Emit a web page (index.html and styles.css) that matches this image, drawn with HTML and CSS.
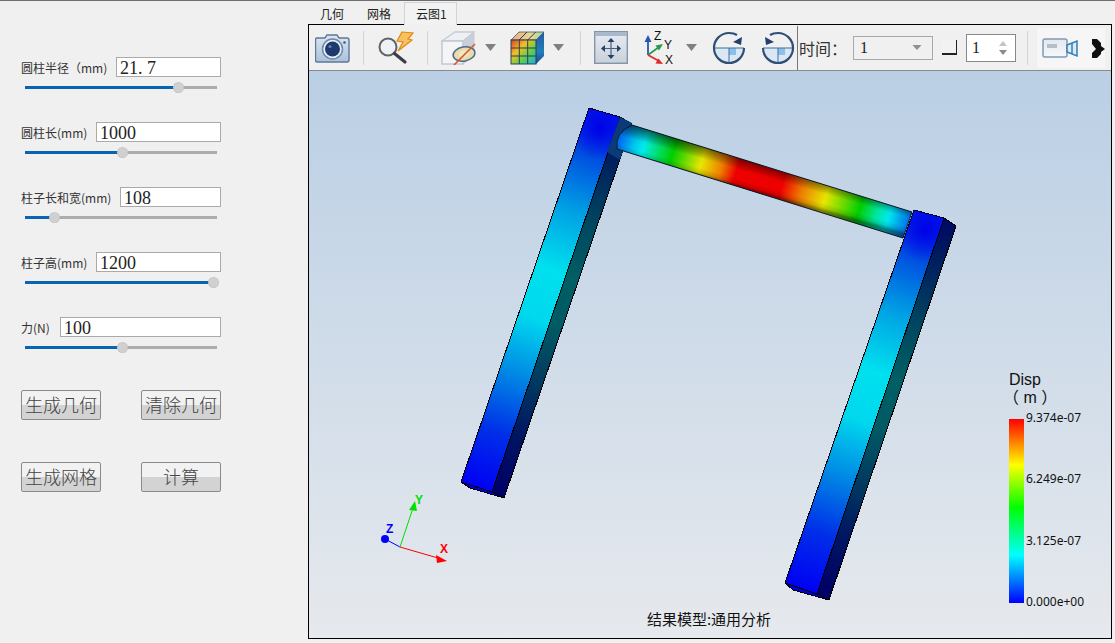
FILE: index.html
```html
<!DOCTYPE html>
<html lang="zh">
<head>
<meta charset="utf-8">
<title>云图</title>
<link rel="stylesheet" href="styles.css">
</head>
<body>
<div class="app">
  <aside class="sidebar">
    <div class="param">
      <div class="param-head"><span class="param-label">圆柱半径（mm)</span><div class="field field-a">21<span class="dot">.</span>7</div></div>
      <div class="slider"><div class="slider-fill" style="width:79.7%"><span class="slider-thumb"></span></div></div>
    </div>
    <div class="param">
      <div class="param-head"><span class="param-label">圆柱长(mm)</span><div class="field field-b">1000</div></div>
      <div class="slider"><div class="slider-fill" style="width:50.5%"><span class="slider-thumb"></span></div></div>
    </div>
    <div class="param">
      <div class="param-head"><span class="param-label">柱子长和宽(mm)</span><div class="field field-c">108</div></div>
      <div class="slider"><div class="slider-fill" style="width:15%"><span class="slider-thumb"></span></div></div>
    </div>
    <div class="param">
      <div class="param-head"><span class="param-label">柱子高(mm)</span><div class="field field-b">1200</div></div>
      <div class="slider"><div class="slider-fill" style="width:98%"><span class="slider-thumb"></span></div></div>
    </div>
    <div class="param">
      <div class="param-head"><span class="param-label">力(N)</span><div class="field field-d">100</div></div>
      <div class="slider"><div class="slider-fill" style="width:50.5%"><span class="slider-thumb"></span></div></div>
    </div>
    <div class="actions">
      <button class="btn">生成几何</button>
      <button class="btn">清除几何</button>
      <button class="btn">生成网格</button>
      <button class="btn">计算</button>
    </div>
  </aside>

  <main class="main">
    <nav class="tabs">
      <span class="tab tab-geo">几何</span>
      <span class="tab tab-mesh">网格</span>
      <span class="tab tab-active">云图1</span>
    </nav>
    <section class="frame">
      <div class="toolbar">
        <svg class="icon i-camera" viewBox="0 0 35 30">
          <defs><linearGradient id="camBody" x1="0" y1="0" x2="0" y2="1"><stop offset="0" stop-color="#dbe6f2"/><stop offset="1" stop-color="#a9c2dc"/></linearGradient></defs>
          <path d="M2 5h8l2-3h10l2 3h8q2 0 2 2v20q0 2-2 2H2q-1.500 0-1.500-2V7Q.5 5 2 5z" fill="url(#camBody)" stroke="#5f7896" stroke-width="1.400"/>
          <circle cx="17.500" cy="16" r="10" fill="#e8eff7" stroke="#6f88a6" stroke-width="1.500"/>
          <circle cx="17.500" cy="16" r="7.500" fill="#1c3a70"/>
          <circle cx="15" cy="13.500" r="1.600" fill="#5f80ad"/>
          <circle cx="29.500" cy="9.500" r="1.300" fill="#3f5c80"/>
        </svg>
        <span class="sep sep-a"></span>
        <svg class="icon i-search" viewBox="0 0 36 35">
          <path d="M24 2l11 1-5 6 4 1-14 11 5-9-6-1z" fill="#f8c060" stroke="#e08a10" stroke-width="1.200"/>
          <circle cx="10" cy="17" r="8.500" fill="#eef2f6" fill-opacity=".8" stroke="#5f6368" stroke-width="2"/>
          <path d="M16.500 23.500L27 32" stroke="#3a3f46" stroke-width="3.200" stroke-linecap="round"/>
        </svg>
        <span class="sep sep-b"></span>
        <svg class="icon i-cube" viewBox="0 0 38 34">
          <path d="M1 10L14 1h19L22 10z" fill="#eff0f3" stroke="#c4ccd6" stroke-width="1.300"/>
          <path d="M22 10L33 1v23l-11 9z" fill="#c9cfd9" stroke="#c4ccd6" stroke-width="1"/>
          <rect x="1" y="10" width="21" height="23" fill="#f5f5f7" stroke="#c0c8d4" stroke-width="1.500"/>
          <ellipse cx="23" cy="23" rx="11" ry="7" transform="rotate(-10 23 23)" fill="#e8dcae" stroke="#50688a" stroke-width="1.500"/>
          <ellipse cx="23" cy="23" rx="5" ry="3.500" transform="rotate(-10 23 23)" fill="#f0e8c8"/>
          <path d="M13 34L34 13" stroke="#d9562b" stroke-width="1.600"/>
        </svg>
        <svg class="icon i-caret caret-a" viewBox="0 0 11 7"><path d="M0 0h11L5.500 7z"/></svg>
        <svg class="icon i-colorcube" viewBox="0 0 35 34">
          <defs>
            <linearGradient id="ccFront" x1="0" y1="0" x2="1" y2="1"><stop offset="0" stop-color="#d8402a"/><stop offset=".35" stop-color="#f4c020"/><stop offset=".65" stop-color="#58d050"/><stop offset="1" stop-color="#20a8e8"/></linearGradient>
            <linearGradient id="ccSide" x1="0" y1="0" x2="0" y2="1"><stop offset="0" stop-color="#2858a0"/><stop offset=".6" stop-color="#2080b8"/><stop offset="1" stop-color="#1848a0"/></linearGradient>
            <linearGradient id="ccTop" x1="0" y1="0" x2="1" y2="0"><stop offset="0" stop-color="#f0a880"/><stop offset=".6" stop-color="#e8d890"/><stop offset="1" stop-color="#a0d8a0"/></linearGradient>
          </defs>
          <path d="M1 9L9 1h25L26 9z" fill="url(#ccTop)" stroke="#3a5474" stroke-width=".8"/>
          <path d="M26 9l8-8v24l-8 8z" fill="url(#ccSide)"/>
          <rect x="1" y="9" width="25" height="24" fill="url(#ccFront)" stroke="#2a3c58" stroke-width="1"/>
          <path d="M9.300 9v24M17.700 9v24M1 17h25M1 25h25M9 9l8-8M17.700 9l8-8" stroke="#2a3c58" stroke-width="1" fill="none"/>
        </svg>
        <svg class="icon i-caret caret-b" viewBox="0 0 11 7"><path d="M0 0h11L5.500 7z"/></svg>
        <span class="sep sep-c"></span>
        <svg class="icon i-fit" viewBox="0 0 34 33">
          <defs><linearGradient id="fitBg" x1="0" y1="0" x2="0" y2="1"><stop offset="0" stop-color="#e8ecf2"/><stop offset="1" stop-color="#c8d0da"/></linearGradient></defs>
          <rect x=".7" y=".7" width="32.600" height="31.600" fill="url(#fitBg)" stroke="#8494aa" stroke-width="1.400"/>
          <rect x="1" y="1" width="32" height="4" fill="#a9b8ca"/>
          <path d="M17 11v13M11 17.500h12" stroke="#4a5f80" stroke-width="1.200"/>
          <path d="M17 7l-3.500 4h7zM17 28l-3.500-4h7zM7 17.500l4-3.500v7zM27 17.500l-4-3.500v7z" fill="#223f6c"/>
        </svg>
        <svg class="icon i-axes" viewBox="0 0 32 36">
          <path d="M4 25V10" stroke="#2458b0" stroke-width="1.800"/><path d="M4 5L.5 12h7z" fill="#2458b0"/>
          <path d="M4 25L15 17" stroke="#2c9a4c" stroke-width="1.800"/><path d="M19 14l-7.500 1.500 3.500 5z" fill="#2c9a4c"/>
          <path d="M4 25l11 6" stroke="#e02a2a" stroke-width="1.800"/><path d="M19 34l-7.500-.5 3-5z" fill="#e02a2a"/>
          <text class="axis-letter" x="10" y="10">Z</text><text class="axis-letter" x="20" y="19">Y</text><text class="axis-letter" x="21" y="34">X</text>
        </svg>
        <svg class="icon i-caret caret-c" viewBox="0 0 11 7"><path d="M0 0h11L5.500 7z"/></svg>
        <svg class="icon i-rot rot-a" viewBox="0 0 34 34">
          <path d="M2 17h30a15 15 0 0 1-30 0z" fill="#dbe8f4"/>
          <path d="M17 17h7v7h-7z" fill="#8cc0ea"/>
          <path d="M2 17h30M17 17v15" fill="none" stroke="#3d6ea0" stroke-width="1"/>
          <path d="M32 17A15 15 0 1 1 17 2q5 0 8 2" fill="none" stroke="#2f4f75" stroke-width="2.200"/>
          <path d="M30 6l-1 8-8-3z" fill="#223f6c"/>
        </svg>
        <svg class="icon i-rot rot-b" viewBox="0 0 34 34">
          <path d="M2 17h30a15 15 0 0 1-30 0z" fill="#dbe8f4"/>
          <path d="M17 17h7v7h-7z" fill="#8cc0ea"/>
          <path d="M2 17h30M17 17v15" fill="none" stroke="#3d6ea0" stroke-width="1"/>
          <path d="M2 17a15 15 0 1 0 15-15q-5 0-8 2" fill="none" stroke="#2f4f75" stroke-width="2.200"/>
          <path d="M4 6l1 8 8-3z" fill="#223f6c"/>
        </svg>
        <span class="sep sep-dark"></span>
        <span class="time-label">时间：</span>
        <div class="combo"><span class="combo-val">1</span><svg class="combo-caret" viewBox="0 0 11 6"><path d="M0 0h11L5.500 6z"/></svg></div>
        <span class="check"></span>
        <div class="spin"><span class="combo-val">1</span>
          <span class="spin-arrows"><svg viewBox="0 0 8 5"><path d="M4 0l4 5H0z" fill="#c4c4c4"/></svg><svg viewBox="0 0 8 5"><path d="M0 0h8L4 5z" fill="#8a8a8a"/></svg></span>
        </div>
        <span class="sep sep-e"></span>
        <div class="rec">
          <svg class="i-video" viewBox="0 0 36 20">
            <defs><linearGradient id="vidBody" x1="0" y1="0" x2="0" y2="1"><stop offset="0" stop-color="#e4e8ee"/><stop offset="1" stop-color="#f6f8fa"/></linearGradient></defs>
            <rect x="1" y="1" width="24" height="18" rx="2" fill="url(#vidBody)" stroke="#7f9ab8" stroke-width="1.500"/>
            <rect x="5" y="6" width="10" height="4" fill="#b4bec9"/>
            <path d="M25 7l10-4v15l-10-4z" fill="#dfeaf4" stroke="#2f7fbc" stroke-width="1.500"/>
            <path d="M30 5v11" stroke="#2f7fbc" stroke-width="1.500"/>
          </svg>
          <svg class="i-next" viewBox="0 0 13 20"><path d="M0 1h5l4 4v3l4 3-4 3v2l-4 4H0v-5l4-4-4-5z" fill="#111"/></svg>
        </div>
      </div>

      <div class="viewport">
        <svg class="scene" viewBox="309 71 802 567">
          <defs>
            <linearGradient id="colL" gradientUnits="userSpaceOnUse" x1="604" y1="112" x2="476" y2="487">
              <stop offset="0" stop-color="#0018e8"/><stop offset=".12" stop-color="#0050e0"/><stop offset=".27" stop-color="#00a4e4"/><stop offset=".42" stop-color="#00e0ee"/><stop offset=".55" stop-color="#00d8ee"/><stop offset=".7" stop-color="#0088e4"/><stop offset=".85" stop-color="#0030e8"/><stop offset="1" stop-color="#0000f4"/>
            </linearGradient>
            <linearGradient id="colR" gradientUnits="userSpaceOnUse" x1="929" y1="214" x2="801" y2="588">
              <stop offset="0" stop-color="#0018e8"/><stop offset=".12" stop-color="#0050e0"/><stop offset=".27" stop-color="#00a4e4"/><stop offset=".42" stop-color="#00e0ee"/><stop offset=".55" stop-color="#00d8ee"/><stop offset=".7" stop-color="#0088e4"/><stop offset=".85" stop-color="#0030e8"/><stop offset="1" stop-color="#0000f4"/>
            </linearGradient>
            <linearGradient id="beamAxis" gradientUnits="userSpaceOnUse" x1="622" y1="135" x2="908" y2="225">
              <stop offset="0" stop-color="#0070f0"/><stop offset=".05" stop-color="#00c8ee"/><stop offset=".08" stop-color="#00ecee"/><stop offset=".13" stop-color="#00e070"/><stop offset=".18" stop-color="#00d000"/><stop offset=".28" stop-color="#e8e800"/><stop offset=".35" stop-color="#f08000"/><stop offset=".4" stop-color="#f00000"/><stop offset=".56" stop-color="#f00000"/><stop offset=".63" stop-color="#f08000"/><stop offset=".71" stop-color="#e8e800"/><stop offset=".83" stop-color="#00d000"/><stop offset=".89" stop-color="#00e8a0"/><stop offset=".93" stop-color="#00e8ee"/><stop offset="1" stop-color="#0070ee"/>
            </linearGradient>
            <linearGradient id="beamShade" gradientUnits="userSpaceOnUse" x1="771" y1="166" x2="763" y2="194">
              <stop offset="0" stop-color="#000" stop-opacity=".55"/><stop offset=".25" stop-color="#000" stop-opacity=".25"/><stop offset=".42" stop-color="#000" stop-opacity=".02"/><stop offset=".72" stop-color="#000" stop-opacity="0"/><stop offset=".88" stop-color="#000" stop-opacity=".12"/><stop offset="1" stop-color="#000" stop-opacity=".45"/>
            </linearGradient>
            <radialGradient id="hotL" gradientUnits="userSpaceOnUse" cx="600" cy="128" r="32"><stop offset="0" stop-color="#0000e8"/><stop offset="1" stop-color="#0000e8" stop-opacity="0"/></radialGradient>
            <radialGradient id="hotR" gradientUnits="userSpaceOnUse" cx="925" cy="230" r="32"><stop offset="0" stop-color="#0000e8"/><stop offset="1" stop-color="#0000e8" stop-opacity="0"/></radialGradient>
          </defs>

          <polygon class="edge" points="461,482 492,492 504,498 470,488" fill="#0000d0"/>
          <polygon class="edge" points="620,117 632,124 504,498 492,492" fill="url(#colL)"/>
          <polygon points="620,117 632,124 504,498 492,492" fill="#000" fill-opacity=".58"/>
          <polygon class="edge" points="589,108 620,117 492,492 461,482" fill="url(#colL)"/>
          <polygon points="589,108 620,117 560,290 540,250" fill="url(#hotL)"/>
          <path d="M620 117L632 123 620 160 607 152z" fill="#0b3a78"/>
          <path class="beam-edge" d="M632 125L912 212 903 238 617 149Q615 132 632 125z" fill="url(#beamAxis)"/>
          <path d="M632 125L912 212 903 238 617 149Q615 132 632 125z" fill="url(#beamShade)"/>

          <polygon class="edge" points="785,583 817,594 829,600 793,590" fill="#0000d0"/>
          <polygon class="edge" points="944,218 956,226 829,600 817,594" fill="url(#colR)"/>
          <polygon points="944,218 956,226 829,600 817,594" fill="#000" fill-opacity=".58"/>
          <polygon class="edge" points="914,210 944,218 817,594 785,583" fill="url(#colR)"/>
          <polygon points="914,210 944,218 885,390 865,350" fill="url(#hotR)"/>

          <g class="triad">
            <line x1="400" y1="547" x2="385" y2="539" stroke="#0000ff"/>
            <circle cx="385" cy="539" r="4" fill="#0000ff"/>
            <line x1="400" y1="547" x2="413" y2="508" stroke="#00e000"/>
            <polygon points="415,501 409,510 417,511" fill="#00e000"/>
            <line x1="400" y1="547" x2="438" y2="558" stroke="#ff0000"/>
            <polygon points="447,561 436,555 437,563" fill="#ff0000"/>
            <text class="t-z" x="386" y="533">Z</text>
            <text class="t-y" x="415" y="504">Y</text>
            <text class="t-x" x="440" y="553">X</text>
          </g>
          <text class="caption" x="709" y="625">结果模型:通用分析</text>
        </svg>

        <div class="legend">
          <div class="legend-title">Disp<br><span class="legend-unit">（ m ）</span></div>
          <div class="legend-body">
            <div class="legend-bar"></div>
            <div class="legend-ticks">
              <span>9.374e-07</span><span>6.249e-07</span><span>3.125e-07</span><span>0.000e+00</span>
            </div>
          </div>
        </div>
      </div>
    </section>
  </main>
</div>
</body>
</html>
```
FILE: styles.css
```css
* { box-sizing: border-box; }
html, body { margin: 0; height: 100%; overflow: hidden; }
body {
  background: #f0f0f0;
  font-family: "Noto Sans CJK SC", "Noto Sans", sans-serif;
  color: #222;
}
.app {
  display: flex;
  height: 643px;
  border-top: 1px solid #6e6e6e;
}

/* sidebar */
.sidebar {
  width: 308px;
  flex: none;
  padding: 56px 87px 0 21px;
  display: flex;
  flex-direction: column;
  gap: 30px;
}
.param { height: 35px; }
.param-head {
  display: flex;
  align-items: center;
  justify-content: space-between;
  height: 20px;
}
.param-label { font-size: 12px; white-space: nowrap; color: #333; }
.field {
  height: 20px;
  background: #fff;
  border: 1px solid #aaa;
  font: 18px/20px "Liberation Serif", serif;
  color: #222;
  padding-left: 3px;
  overflow: hidden;
}
.field-a { width: 105px; }
.field-b { width: 125px; }
.field-c { width: 101px; }
.field-d { width: 161px; }
.dot { display: inline-block; width: 9px; }
.slider {
  position: relative;
  margin: 9px 0 0 4px;
  width: 192px;
  height: 3px;
  background: #adadad;
}
.slider-fill {
  position: relative;
  height: 3px;
  background: #0a64b4;
}
.slider-thumb {
  position: absolute;
  right: -6px;
  top: -4px;
  width: 11px;
  height: 11px;
  border-radius: 50%;
  background: #d0d0d0;
  border: 1px dotted #bbb;
}
.actions {
  display: grid;
  grid-template-columns: 80px 80px;
  justify-content: space-between;
  row-gap: 42px;
  margin-top: 8px;
}
.btn {
  height: 30px;
  padding: 0 0 3px;
  border: 1px solid #8a8a8a;
  border-radius: 2px;
  background: linear-gradient(#f2f2f2 0 50%, #d3d3d3 50%);
  font-family: "Noto Sans CJK SC", sans-serif;
  font-size: 18px;
  font-weight: 300;
  line-height: 24px;
  color: #444;
}

/* main */
.main {
  width: 804px;
  flex: none;
  display: flex;
  flex-direction: column;
  height: 638px;
}
.tabs {
  height: 23px;
  display: flex;
  align-items: flex-end;
  flex: none;
}
.tab {
  font-size: 12px;
  line-height: 20px;
  color: #222;
}
.tab-geo { margin-left: 12px; }
.tab-mesh { margin-left: 23px; }
.tab-active {
  margin-left: 13px;
  width: 53px;
  padding-left: 11px;
  height: 23px;
  line-height: 22px;
  margin-bottom: -1px;
  border: 1px solid #d4d4d4;
  border-bottom: 0;
  background: #f2f2f2;
  position: relative;
  z-index: 1;
}
.frame {
  flex: 1;
  border: 1px solid #000;
  display: flex;
  flex-direction: column;
  min-height: 0;
}

/* toolbar */
.toolbar {
  height: 46px;
  flex: none;
  display: flex;
  align-items: center;
  background: #f0f0f0;
  border-bottom: 1px solid #8a8a8a;
  overflow: hidden;
}
.icon { display: block; flex: none; }
.i-camera { width: 35px; height: 30px; margin-left: 6px; }
.sep { flex: none; width: 1px; height: 34px; background: #d2d2d2; }
.sep-a { margin-left: 13px; }
.i-search { width: 36px; height: 35px; margin-left: 14px; }
.sep-b { margin-left: 13px; }
.i-cube { width: 38px; height: 34px; margin-left: 13px; }
.i-caret { width: 11px; height: 7px; fill: #808080; }
.caret-a { margin-left: 6px; }
.i-colorcube { width: 35px; height: 34px; margin-left: 14px; }
.caret-b { margin-left: 8px; }
.sep-c { margin-left: 16px; }
.i-fit { width: 34px; height: 33px; margin-left: 13px; }
.i-axes { width: 32px; height: 36px; margin-left: 16px; }
.axis-letter { font: 12px "Liberation Sans", sans-serif; fill: #111; }
.caret-c { margin-left: 10px; }
.i-rot { width: 34px; height: 34px; }
.rot-a { margin-left: 15px; }
.rot-b { margin-left: 15px; }
.sep-dark { width: 1px; height: 44px; background: #777; margin-left: 2px; }
.time-label {
  margin-left: 1px;
  width: 54px;
  flex: none;
  font-size: 16px;
  white-space: nowrap;
  color: #333;
}
.combo {
  flex: none;
  width: 80px;
  height: 24px;
  border: 1px solid #a8a8a8;
  display: flex;
  align-items: center;
  justify-content: space-between;
  padding: 0 10px 0 6px;
}
.combo-val { font: 16px/1 "Liberation Serif", serif; color: #222; }
.combo-caret { width: 10px; height: 5px; fill: #909090; }
.check {
  flex: none;
  width: 15px;
  height: 15px;
  margin-left: 9px;
  border-right: 1px solid #222;
  border-bottom: 2px solid #222;
  background: #f2f2f2;
}
.spin {
  flex: none;
  width: 50px;
  height: 28px;
  margin-left: 9px;
  background: #fff;
  border: 1px solid #888;
  display: flex;
  align-items: center;
  justify-content: space-between;
  padding: 0 8px 0 5px;
}
.spin-arrows { display: flex; flex-direction: column; gap: 4px; }
.spin-arrows svg { display: block; width: 8px; height: 5px; }
.sep-e { margin-left: 11px; }
.rec {
  flex: none;
  margin-left: 9px;
  width: 68px;
  height: 40px;
  background: #f6f6f6;
  display: flex;
  align-items: center;
  padding-left: 5px;
}
.i-video { width: 36px; height: 20px; flex: none; }
.i-next { width: 13px; height: 20px; flex: none; margin-left: 14px; }

/* viewport */
.viewport {
  position: relative;
  flex: 1;
  min-height: 0;
  background: linear-gradient(#bacfe5, #e6e9ed);
  overflow: hidden;
}
.scene { display: block; width: 100%; height: 100%; }
.edge { stroke: #000; stroke-width: 1; shape-rendering: crispEdges; stroke-linejoin: round; }
.beam-edge { stroke: #0a1a30; stroke-width: 1; }
.triad line { stroke-width: 1; }
.triad text { font: bold 12px "Liberation Sans", sans-serif; }
.t-z { fill: #0000ff; }
.t-y { fill: #00e000; }
.t-x { fill: #ff0000; }
.caption {
  font: 15px "Noto Sans CJK SC", sans-serif;
  fill: #111;
  text-anchor: middle;
}
.legend {
  position: absolute;
  left: 700px;
  top: 300px;
  color: #111;
}
.legend-title {
  font: 16px/18px "Liberation Sans", "Noto Sans CJK SC", sans-serif;
  white-space: nowrap;
  height: 38px;
}
.legend-unit { margin-left: -6px; }
.legend-body { display: flex; margin-top: 10px; }
.legend-bar {
  width: 15px;
  height: 184px;
  background: linear-gradient(#ff0000 0, #ffff00 25%, #00ff00 48%, #00ffff 74%, #0000ff 100%);
}
.legend-ticks {
  height: 196px;
  margin: -7px 0 0 2px;
  display: flex;
  flex-direction: column;
  justify-content: space-between;
  font: 12px/12px "Noto Sans", sans-serif;
  white-space: nowrap;
}
```
